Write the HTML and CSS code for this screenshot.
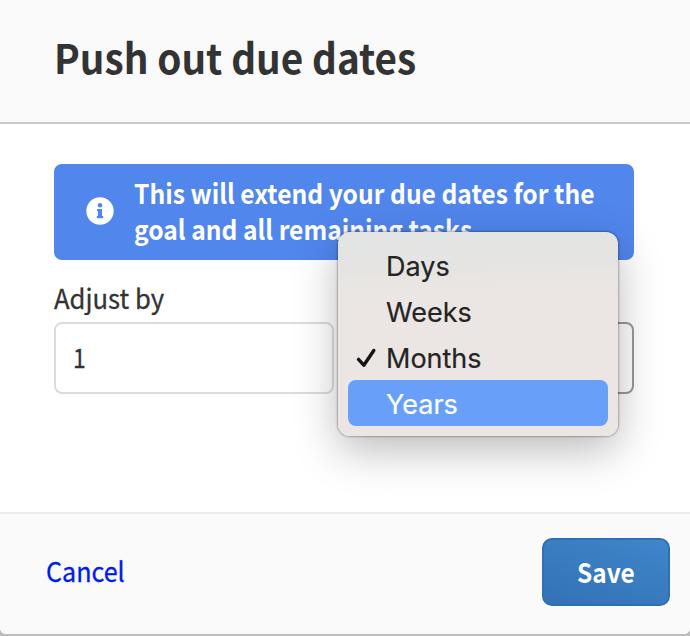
FILE: index.html
```html
<!DOCTYPE html>
<html lang="en">
<head>
<meta charset="utf-8">
<title>Push out due dates</title>
<link rel="stylesheet" href="styles.css">
</head>
<body>
<div class="dialog">
  <header class="header"><h1 class="title">Push out due dates</h1></header>
  <main class="content">
    <div class="alert">
      <svg class="info" viewBox="0 0 28 28"><circle cx="14" cy="14" r="13.7" fill="#fff"/><circle cx="14" cy="8.2" r="2.3" fill="#5186ec"/><path d="M11 12h5v7h1.200v2.200h-6.400V19H12v-4.800h-1z" fill="#5186ec"/></svg>
      <p class="message">This will extend your due dates for the<br>goal and all remaining tasks.</p>
    </div>
    <div class="label">Adjust by</div>
    <div class="fields">
      <div class="field"><span class="value">1</span></div>
      <div class="field field-unit">
        <div class="menu">
          <div class="option">Days</div>
          <div class="option">Weeks</div>
          <div class="option"><svg class="check" viewBox="0 0 20 20"><path d="M2 11.400 7.300 17.200 17.300 2.500" fill="none" stroke="#151515" stroke-width="3.4" stroke-linecap="round" stroke-linejoin="round"/></svg>Months</div>
          <div class="option option-active">Years</div>
        </div>
      </div>
    </div>
  </main>
  <footer class="footer">
    <a class="cancel">Cancel</a>
    <button class="save"><span class="save-text">Save</span></button>
  </footer>
</div>
</body>
</html>
```
FILE: styles.css
```css
* { box-sizing: border-box; }
body {
  margin: 0;
  background: #bdbdbd;
  color: #333;
  font-family: "Noto Sans CJK JP", "Open Sans", sans-serif;
  font-size: 27px;
  overflow: hidden;
}
.dialog {
  height: 634px;
  display: flex;
  flex-direction: column;
  background: #fff;
  border-radius: 0 0 6px 6px;
  overflow: hidden;
}
.header {
  height: 124px;
  padding: 26px 54px 0;
  background: #fafafa;
  border-bottom: 2px solid #c9c9c9;
}
.title {
  margin: 0;
  font-size: 41px;
  line-height: 60px;
  font-weight: 700;
  white-space: nowrap;
  transform: scaleX(.944);
  transform-origin: left;
}
.content { flex: 1; padding: 40px 56px 0 54px; }
.alert {
  display: flex;
  height: 96px;
  padding: 11px 0 0 32px;
  gap: 20px;
  background: #5186ec;
  border-radius: 8px;
  color: #fff;
}
.info { flex: none; width: 28px; height: 28px; margin-top: 22px; }
.message {
  flex: none;
  margin: 0;
  font-weight: 700;
  line-height: 36px;
  white-space: nowrap;
  transform: scaleX(.912);
  transform-origin: left;
}
.label {
  margin-top: 20px;
  line-height: 36px;
  height: 42px;
  transform: scaleX(.95);
  transform-origin: left;
  -webkit-text-stroke: .3px;
}
.fields { display: flex; gap: 20px; }
.field {
  width: 280px;
  height: 72px;
  padding: 0 17px;
  line-height: 66px;
  border: 2px solid #dcdcdc;
  border-radius: 8px;
}
.value {
  display: inline-block;
  transform: scaleX(.85);
  transform-origin: left;
  -webkit-text-stroke: .3px;
}
.field-unit { position: relative; border-color: #999; }
.menu {
  position: absolute;
  left: -18px;
  top: -92px;
  width: 280px;
  height: 204px;
  padding: 10px;
  border-radius: 12px;
  background: linear-gradient(178deg, #e1e5e4 0, #e5e4e2 35px, #ebe6e3 65px);
  box-shadow: 0 0 2px 1px rgba(0,0,0,.28), 0 14px 44px rgba(0,0,0,.27);
  font-family: Inter, sans-serif;
  color: #242424;
}
.option {
  display: flex;
  align-items: center;
  position: relative;
  height: 46px;
  padding: 4px 0 0 38px;
  line-height: 42px;
  border-radius: 8px;
  -webkit-text-stroke: .2px;
}
.option-active { background: #679ff9; color: #fff; }
.check { position: absolute; left: 8px; top: 14px; width: 21px; height: 20px; }
.footer {
  display: flex;
  justify-content: space-between;
  align-items: flex-start;
  height: 122px;
  padding: 24px 20px 0 46px;
  background: #fafafa;
  border-top: 2px solid #ececec;
}
.cancel {
  color: #001bea;
  line-height: 66px;
  transform: scaleX(.93);
  transform-origin: left;
  -webkit-text-stroke: .3px;
}
.save {
  width: 128px;
  height: 68px;
  padding: 0 0 1px;
  border: 2px solid #306fb3;
  border-radius: 10px;
  background: linear-gradient(20deg, #3371b5, #3f86ca);
  color: #fff;
  font: 700 27px "Noto Sans CJK JP", "Open Sans", sans-serif;
}
.save-text { display: inline-block; transform: scaleX(.905); }
```
